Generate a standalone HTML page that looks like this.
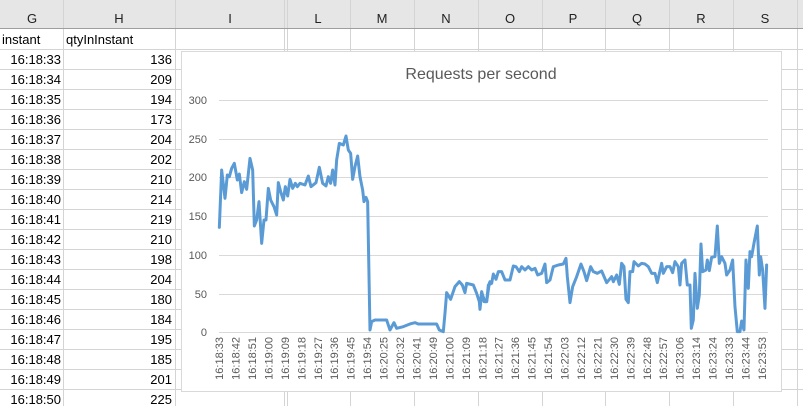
<!DOCTYPE html>
<html><head><meta charset="utf-8"><style>
html,body{margin:0;padding:0;background:#fff;width:803px;height:406px;overflow:hidden;font-family:"Liberation Sans",sans-serif}
</style></head><body>
<svg width="803" height="406" viewBox="0 0 803 406" xmlns="http://www.w3.org/2000/svg" style="position:absolute;left:0;top:0">
<rect x="0" y="0" width="803" height="29" fill="#e6e6e6"/>
<g stroke="#d4d4d4" stroke-width="1">
<line x1="0" y1="49.5" x2="803" y2="49.5"/>
<line x1="0" y1="69.5" x2="803" y2="69.5"/><line x1="0" y1="89.5" x2="803" y2="89.5"/>
<line x1="0" y1="109.5" x2="803" y2="109.5"/><line x1="0" y1="129.5" x2="803" y2="129.5"/>
<line x1="0" y1="149.5" x2="803" y2="149.5"/><line x1="0" y1="169.5" x2="803" y2="169.5"/>
<line x1="0" y1="189.5" x2="803" y2="189.5"/><line x1="0" y1="209.5" x2="803" y2="209.5"/>
<line x1="0" y1="229.5" x2="803" y2="229.5"/><line x1="0" y1="249.5" x2="803" y2="249.5"/>
<line x1="0" y1="269.5" x2="803" y2="269.5"/><line x1="0" y1="289.5" x2="803" y2="289.5"/>
<line x1="0" y1="309.5" x2="803" y2="309.5"/><line x1="0" y1="329.5" x2="803" y2="329.5"/>
<line x1="0" y1="349.5" x2="803" y2="349.5"/><line x1="0" y1="369.5" x2="803" y2="369.5"/>
<line x1="0" y1="389.5" x2="803" y2="389.5"/>
<line x1="63.5" y1="0" x2="63.5" y2="406"/><line x1="175.5" y1="0" x2="175.5" y2="406"/>
<line x1="284.5" y1="0" x2="284.5" y2="406"/><line x1="287.5" y1="0" x2="287.5" y2="406"/>
<line x1="350.5" y1="0" x2="350.5" y2="406"/><line x1="414.5" y1="0" x2="414.5" y2="406"/>
<line x1="478.5" y1="0" x2="478.5" y2="406"/><line x1="542.5" y1="0" x2="542.5" y2="406"/>
<line x1="605.5" y1="0" x2="605.5" y2="406"/><line x1="669.5" y1="0" x2="669.5" y2="406"/>
<line x1="733.5" y1="0" x2="733.5" y2="406"/><line x1="797.5" y1="0" x2="797.5" y2="406"/>
</g>
<line x1="0" y1="28.5" x2="803" y2="28.5" stroke="#9e9e9e"/>
<g font-size="13" fill="#222" text-anchor="middle">
<text x="32" y="23">G</text><text x="119" y="23">H</text><text x="230" y="23">I</text><text x="318" y="23">L</text><text x="382" y="23">M</text><text x="446" y="23">N</text><text x="510" y="23">O</text><text x="573" y="23">P</text><text x="637" y="23">Q</text><text x="701" y="23">R</text><text x="765" y="23">S</text>
</g>
<g font-size="13" fill="#000">
<text x="2" y="44">instant</text><text x="66" y="44">qtyInInstant</text>
</g>
<g font-size="13" fill="#000" text-anchor="end">
<text x="61" y="64">16:18:33</text><text x="172" y="64">136</text>
<text x="61" y="84">16:18:34</text><text x="172" y="84">209</text>
<text x="61" y="104">16:18:35</text><text x="172" y="104">194</text>
<text x="61" y="124">16:18:36</text><text x="172" y="124">173</text>
<text x="61" y="144">16:18:37</text><text x="172" y="144">204</text>
<text x="61" y="164">16:18:38</text><text x="172" y="164">202</text>
<text x="61" y="184">16:18:39</text><text x="172" y="184">210</text>
<text x="61" y="204">16:18:40</text><text x="172" y="204">214</text>
<text x="61" y="224">16:18:41</text><text x="172" y="224">219</text>
<text x="61" y="244">16:18:42</text><text x="172" y="244">210</text>
<text x="61" y="264">16:18:43</text><text x="172" y="264">198</text>
<text x="61" y="284">16:18:44</text><text x="172" y="284">204</text>
<text x="61" y="304">16:18:45</text><text x="172" y="304">180</text>
<text x="61" y="324">16:18:46</text><text x="172" y="324">184</text>
<text x="61" y="344">16:18:47</text><text x="172" y="344">195</text>
<text x="61" y="364">16:18:48</text><text x="172" y="364">185</text>
<text x="61" y="384">16:18:49</text><text x="172" y="384">201</text>
<text x="61" y="404">16:18:50</text><text x="172" y="404">225</text>
</g>
<rect x="181.5" y="51.5" width="600" height="340" fill="#fff" stroke="#d9d9d9"/>
<text x="481" y="79" font-size="16" fill="#595959" text-anchor="middle">Requests per second</text>
<g stroke="#d9d9d9" stroke-width="1">
<line x1="219" y1="100.5" x2="768" y2="100.5"/><line x1="219" y1="139.5" x2="768" y2="139.5"/>
<line x1="219" y1="177.5" x2="768" y2="177.5"/><line x1="219" y1="216.5" x2="768" y2="216.5"/>
<line x1="219" y1="255.5" x2="768" y2="255.5"/><line x1="219" y1="294.5" x2="768" y2="294.5"/>
<line x1="219" y1="332.5" x2="768" y2="332.5"/>
</g>
<g font-size="11" fill="#595959" text-anchor="end">
<text x="207" y="104">300</text><text x="207" y="143">250</text><text x="207" y="181">200</text><text x="207" y="220">150</text><text x="207" y="259">100</text><text x="207" y="298">50</text><text x="207" y="336">0</text>
</g>
<g font-size="11" fill="#595959" text-anchor="end">
<text transform="translate(223,337) rotate(-90)">16:18:33</text>
<text transform="translate(239.5,337) rotate(-90)">16:18:42</text>
<text transform="translate(256,337) rotate(-90)">16:18:51</text>
<text transform="translate(272.4,337) rotate(-90)">16:19:00</text>
<text transform="translate(288.9,337) rotate(-90)">16:19:09</text>
<text transform="translate(305.3,337) rotate(-90)">16:19:18</text>
<text transform="translate(321.8,337) rotate(-90)">16:19:27</text>
<text transform="translate(338.2,337) rotate(-90)">16:19:36</text>
<text transform="translate(354.7,337) rotate(-90)">16:19:45</text>
<text transform="translate(371.1,337) rotate(-90)">16:19:54</text>
<text transform="translate(387.6,337) rotate(-90)">16:20:25</text>
<text transform="translate(404,337) rotate(-90)">16:20:32</text>
<text transform="translate(420.5,337) rotate(-90)">16:20:41</text>
<text transform="translate(436.9,337) rotate(-90)">16:20:49</text>
<text transform="translate(453.4,337) rotate(-90)">16:21:00</text>
<text transform="translate(469.8,337) rotate(-90)">16:21:09</text>
<text transform="translate(486.3,337) rotate(-90)">16:21:18</text>
<text transform="translate(502.7,337) rotate(-90)">16:21:27</text>
<text transform="translate(519.2,337) rotate(-90)">16:21:36</text>
<text transform="translate(535.6,337) rotate(-90)">16:21:45</text>
<text transform="translate(552.1,337) rotate(-90)">16:21:54</text>
<text transform="translate(568.5,337) rotate(-90)">16:22:03</text>
<text transform="translate(585,337) rotate(-90)">16:22:12</text>
<text transform="translate(601.4,337) rotate(-90)">16:22:21</text>
<text transform="translate(617.9,337) rotate(-90)">16:22:30</text>
<text transform="translate(634.3,337) rotate(-90)">16:22:39</text>
<text transform="translate(650.8,337) rotate(-90)">16:22:48</text>
<text transform="translate(667.2,337) rotate(-90)">16:22:57</text>
<text transform="translate(683.7,337) rotate(-90)">16:23:06</text>
<text transform="translate(700.1,337) rotate(-90)">16:23:14</text>
<text transform="translate(716.6,337) rotate(-90)">16:23:24</text>
<text transform="translate(733,337) rotate(-90)">16:23:33</text>
<text transform="translate(749.5,337) rotate(-90)">16:23:44</text>
<text transform="translate(766,337) rotate(-90)">16:23:53</text>
</g>
<g fill="none" stroke="#5b9bd5" stroke-width="9" stroke-linejoin="round" stroke-linecap="round">
<polyline transform="translate(210,120) scale(0.3333)" points="28,322 35,150 45,235 52,165 58,170 65,145 73,130 82,180 88,162 95,218 103,185 110,208 120,115 128,150 133,318 140,300 147,245 155,370 162,300 168,300 175,205 182,240 192,260 200,285 205,188 212,215 220,240 226,200 233,228 240,178 248,205 256,190 262,200 270,190 285,195 295,168 303,200 318,188 328,142 338,190 348,198 355,170 362,190 368,150 375,195 380,120 388,70 400,75 408,48 415,90 422,100 428,178 435,140 443,108 450,170 458,210 462,245 468,232 473,245 480,630 485,605 495,600 510,600 530,600 540,630 552,608 560,625 580,620 600,612 615,608 625,612 680,612 688,630 700,635 705,580 710,518 722,538 735,500 748,485 757,495 765,518 770,490 790,495 800,520 808,545 810,568 815,518 825,545 830,545 838,490 840,485"/>
<polyline transform="translate(480,120) scale(0.3333)" points="0,560 5,515 12,545 20,545 25,495 35,490 40,462 48,478 55,455 65,455 75,480 90,480 100,438 108,440 118,455 125,440 135,450 145,440 155,450 165,445 173,465 185,460 195,432 200,488 210,480 220,440 235,435 250,432 258,415 262,470 270,548 278,500 290,470 303,432 312,455 320,482 332,440 340,455 352,460 365,453 380,488 395,470 400,485 410,465 418,493 425,430 432,440 438,538 445,548 450,455 458,455 462,425 475,438 485,430 495,432 505,440 515,460 525,460 532,488 545,430 550,460 560,440 570,440 578,458 585,425 595,440 600,495 605,430 615,420 622,495 630,495 634,625 640,600 645,460 652,565 658,525 663,372 668,455 678,450 682,420 688,452 695,412 705,410 712,318 718,430 725,410 735,430 740,465 750,450 758,420 765,560 772,635 780,635 785,603 792,630 798,420 805,505 810,395 815,410 822,370 832,318 838,465 842,410 848,450 855,565 860,435"/>
</g>
</svg>
</body></html>
